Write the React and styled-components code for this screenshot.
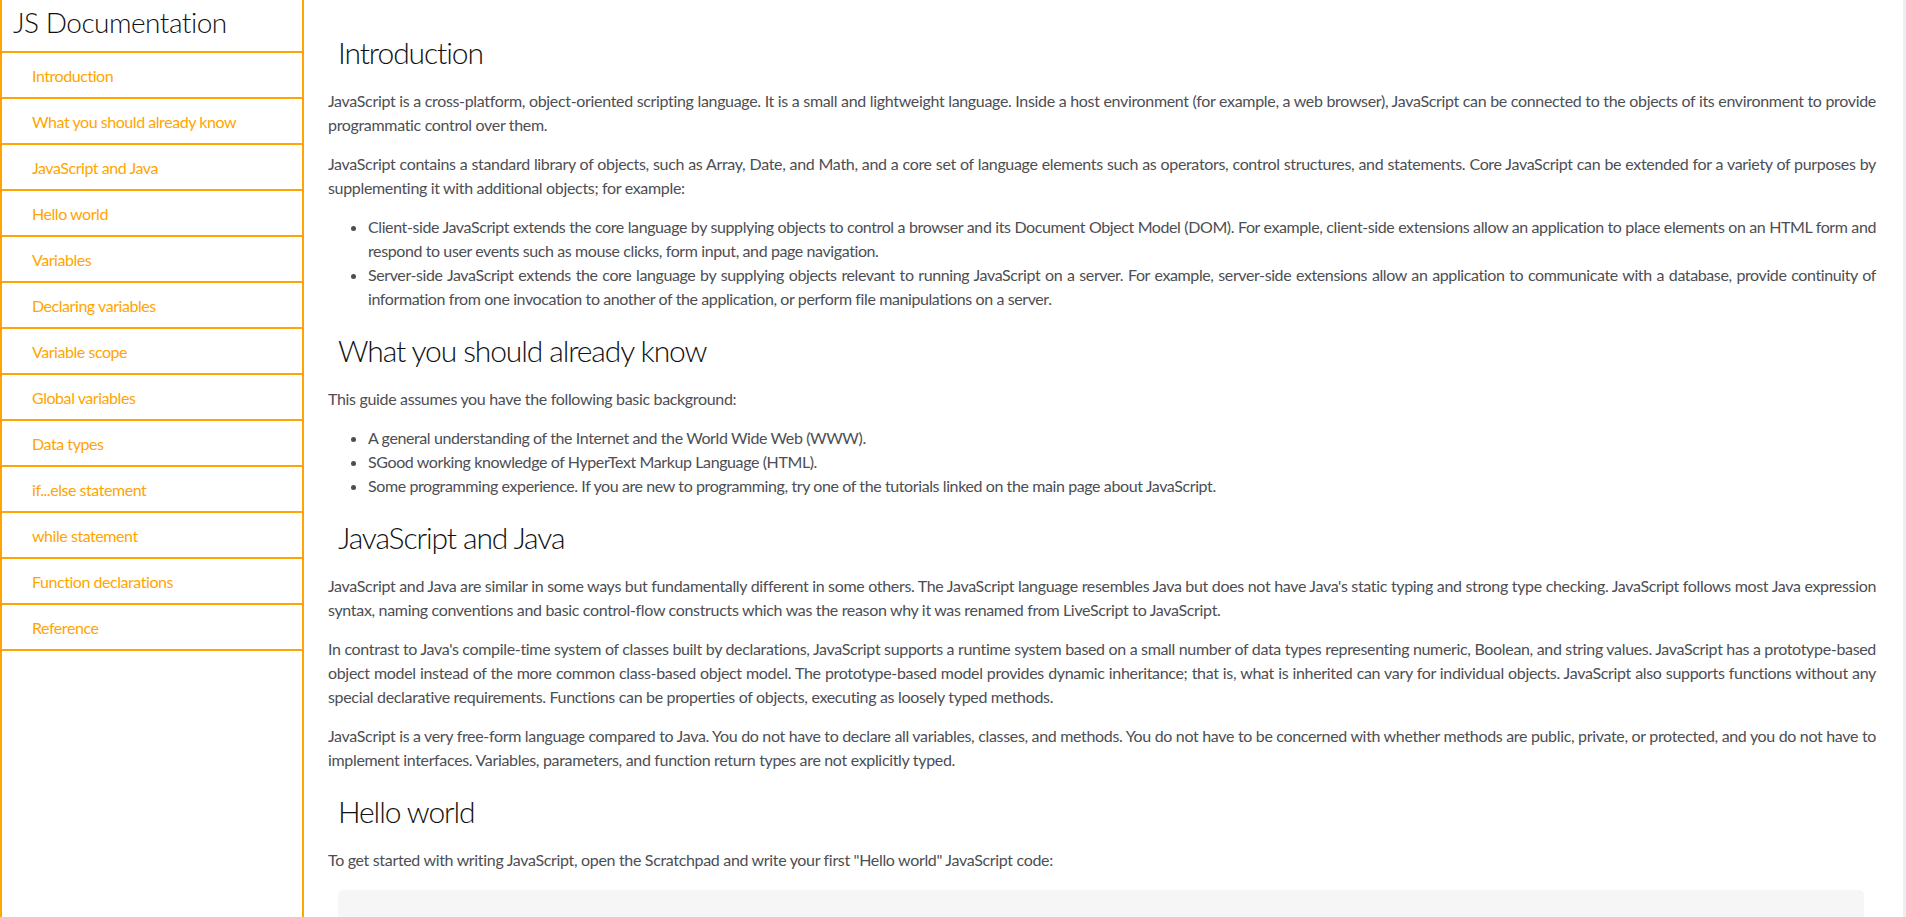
import React from "react";
import styled, { createGlobalStyle } from "styled-components";

const GlobalStyle = createGlobalStyle`
  html, body {
    margin: 0;
    padding: 0;
    height: 100%;
    background: #fff;
  }
  body {
    font-family: Lato, "Open Sans", sans-serif;
    color: #4d4e53;
  }
`;

const Page = styled.div`
  display: flex;
  height: 100vh;
  overflow: hidden;
`;

const Sidebar = styled.nav`
  flex: 0 0 304px;
  box-sizing: border-box;
  border-left: 2px solid #ffa500;
  border-right: 2px solid #ffa500;
  height: 100%;
`;

const NavTitle = styled.header`
  height: 53px;
  box-sizing: border-box;
  padding: 2px 0 0 11px;
  border-bottom: 2px solid #ffa500;
  font-size: 28px;
  font-weight: 300;
  line-height: 40px;
  color: #111;
  letter-spacing: -0.5px;
`;

const NavList = styled.ul`
  list-style: none;
  margin: 0;
  padding: 0;
`;

const NavItem = styled.li`
  border-bottom: 2px solid #ffa500;
`;

const NavLink = styled.a`
  display: block;
  height: 44px;
  line-height: 45px;
  padding-left: 30px;
  font-size: 16px;
  color: #ffa500;
  text-decoration: none;
  letter-spacing: -0.45px;
`;

const Main = styled.main`
  flex: 1;
  min-width: 0;
  box-sizing: border-box;
  padding: 13px 27px 0 24px;
  border-right: 3px solid #eeeeee;
  overflow: hidden;
`;

const Section = styled.section``;

const Heading = styled.h2`
  margin: 20px 0 18px 10px;
  font-size: 30px;
  font-weight: 300;
  line-height: 38px;
  color: #111;
  letter-spacing: -1.1px;
`;

const Para = styled.p`
  margin: 15px 0;
  font-size: 16px;
  line-height: 24px;
  text-align: justify;
  letter-spacing: -0.33px;
`;

const List = styled.ul`
  margin: 15px 0;
  padding-left: 40px;
  font-size: 16px;
  line-height: 24px;
  text-align: justify;
  letter-spacing: -0.4px;
`;

const CodeBox = styled.pre`
  margin: 18px 12px 0 10px;
  padding: 30px 24px;
  background: #f6f6f6;
  border-radius: 5px;
  font-family: "Liberation Mono", monospace;
  font-size: 14px;
  color: #333;
`;

const navItems = [
  "Introduction",
  "What you should already know",
  "JavaScript and Java",
  "Hello world",
  "Variables",
  "Declaring variables",
  "Variable scope",
  "Global variables",
  "Data types",
  "if...else statement",
  "while statement",
  "Function declarations",
  "Reference",
];

const App = () => {
  return (
    <Page>
      <GlobalStyle />
      <Sidebar id="navbar">
        <NavTitle>JS Documentation</NavTitle>
        <NavList>
          {navItems.map((item) => (
            <NavItem key={item}>
              <NavLink href={`#${item.replace(/ /g, "_")}`}>{item}</NavLink>
            </NavItem>
          ))}
        </NavList>
      </Sidebar>
      <Main id="main-doc">
        <Section id="Introduction">
          <Heading>Introduction</Heading>
          <Para>
            JavaScript is a cross-platform, object-oriented scripting language.
            It is a small and lightweight language. Inside a host environment
            (for example, a web browser), JavaScript can be connected to the
            objects of its environment to provide programmatic control over
            them.
          </Para>
          <Para>
            JavaScript contains a standard library of objects, such as Array,
            Date, and Math, and a core set of language elements such as
            operators, control structures, and statements. Core JavaScript can
            be extended for a variety of purposes by supplementing it with
            additional objects; for example:
          </Para>
          <List>
            <li>
              Client-side JavaScript extends the core language by supplying
              objects to control a browser and its Document Object Model (DOM).
              For example, client-side extensions allow an application to place
              elements on an HTML form and respond to user events such as mouse
              clicks, form input, and page navigation.
            </li>
            <li>
              Server-side JavaScript extends the core language by supplying
              objects relevant to running JavaScript on a server. For example,
              server-side extensions allow an application to communicate with a
              database, provide continuity of information from one invocation
              to another of the application, or perform file manipulations on a
              server.
            </li>
          </List>
        </Section>
        <Section id="What_you_should_already_know">
          <Heading>What you should already know</Heading>
          <Para>This guide assumes you have the following basic background:</Para>
          <List>
            <li>
              A general understanding of the Internet and the World Wide Web
              (WWW).
            </li>
            <li>SGood working knowledge of HyperText Markup Language (HTML).</li>
            <li>
              Some programming experience. If you are new to programming, try
              one of the tutorials linked on the main page about JavaScript.
            </li>
          </List>
        </Section>
        <Section id="JavaScript_and_Java">
          <Heading>JavaScript and Java</Heading>
          <Para>
            JavaScript and Java are similar in some ways but fundamentally
            different in some others. The JavaScript language resembles Java but
            does not have Java's static typing and strong type checking.
            JavaScript follows most Java expression syntax, naming conventions
            and basic control-flow constructs which was the reason why it was
            renamed from LiveScript to JavaScript.
          </Para>
          <Para>
            In contrast to Java's compile-time system of classes built by
            declarations, JavaScript supports a runtime system based on a small
            number of data types representing numeric, Boolean, and string
            values. JavaScript has a prototype-based object model instead of the
            more common class-based object model. The prototype-based model
            provides dynamic inheritance; that is, what is inherited can vary
            for individual objects. JavaScript also supports functions without
            any special declarative requirements. Functions can be properties of
            objects, executing as loosely typed methods.
          </Para>
          <Para>
            JavaScript is a very free-form language compared to Java. You do not
            have to declare all variables, classes, and methods. You do not have
            to be concerned with whether methods are public, private, or
            protected, and you do not have to implement interfaces. Variables,
            parameters, and function return types are not explicitly typed.
          </Para>
        </Section>
        <Section id="Hello_world">
          <Heading>Hello world</Heading>
          <Para>
            To get started with writing JavaScript, open the Scratchpad and
            write your first "Hello world" JavaScript code:
          </Para>
          <CodeBox>
            {`function greetMe(yourName) { alert("Hello " + yourName); }
greetMe("World");`}
          </CodeBox>
        </Section>
      </Main>
    </Page>
  );
};

export default App;
